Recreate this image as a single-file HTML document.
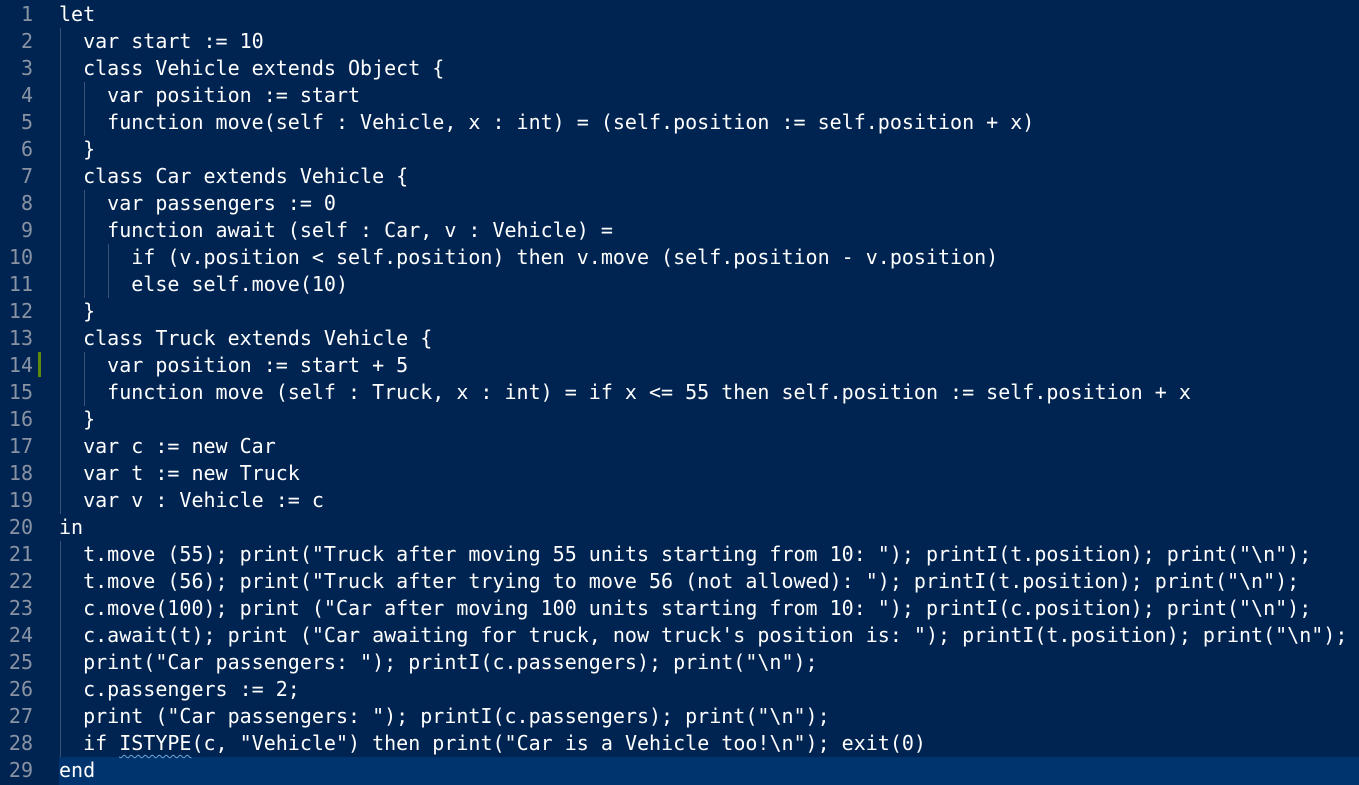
<!DOCTYPE html>
<html><head><meta charset="utf-8"><style>
body{margin:0;width:1359px;height:785px;background:#002451;overflow:hidden;position:relative;font-family:"DejaVu Sans Mono","Liberation Mono",monospace;font-size:20px}
.r{position:absolute;left:0;height:27px;line-height:27px;width:1359px;white-space:pre}
.n{position:absolute;left:0;width:33px;text-align:right;color:#8a93a3}
.c{position:absolute;left:59px;color:#ffffff}
.g{position:absolute;width:1px;background:#3d5279}
.sq{text-decoration:underline wavy #6fa8dc;text-decoration-thickness:1px;text-underline-offset:4px}
</style></head><body>
<div style="position:absolute;top:757px;left:59px;width:1300px;height:28px;background:#00346e"></div>
<div class="g" style="left:60px;top:28px;height:486px"></div>
<div class="g" style="left:60px;top:541px;height:216px"></div>
<div class="g" style="left:84px;top:82px;height:54px"></div>
<div class="g" style="left:84px;top:190px;height:108px"></div>
<div class="g" style="left:84px;top:352px;height:54px"></div>
<div class="g" style="left:108px;top:244px;height:54px"></div>
<div style="position:absolute;left:38px;top:352px;width:3px;height:25px;background:#5f8a10"></div>
<div id="L"></div>
<script>
var lines=["let","  var start := 10","  class Vehicle extends Object {","    var position := start","    function move(self : Vehicle, x : int) = (self.position := self.position + x)","  }","  class Car extends Vehicle {","    var passengers := 0","    function await (self : Car, v : Vehicle) =","      if (v.position < self.position) then v.move (self.position - v.position)","      else self.move(10)","  }","  class Truck extends Vehicle {","    var position := start + 5","    function move (self : Truck, x : int) = if x <= 55 then self.position := self.position + x","  }","  var c := new Car","  var t := new Truck","  var v : Vehicle := c","in","  t.move (55); print(\"Truck after moving 55 units starting from 10: \"); printI(t.position); print(\"\\n\");","  t.move (56); print(\"Truck after trying to move 56 (not allowed): \"); printI(t.position); print(\"\\n\");","  c.move(100); print (\"Car after moving 100 units starting from 10: \"); printI(c.position); print(\"\\n\");","  c.await(t); print (\"Car awaiting for truck, now truck's position is: \"); printI(t.position); print(\"\\n\");","  print(\"Car passengers: \"); printI(c.passengers); print(\"\\n\");","  c.passengers := 2;","  print (\"Car passengers: \"); printI(c.passengers); print(\"\\n\");","  if ISTYPE(c, \"Vehicle\") then print(\"Car is a Vehicle too!\\n\"); exit(0)","end"];
function esc(s){return s.replace(/&/g,"&amp;").replace(/</g,"&lt;").replace(/>/g,"&gt;");}
var h="";
for(var i=0;i<lines.length;i++){
 var t=esc(lines[i]);
 if(i==27)t=t.replace("ISTYPE","<span class=\"sq\">ISTYPE</span>");
 h+='<div class="r" style="top:'+(1+i*27)+'px"><span class="n">'+(i+1)+'</span><span class="c">'+t+'</span></div>';
}
document.getElementById("L").innerHTML=h;
</script>
</body></html>
